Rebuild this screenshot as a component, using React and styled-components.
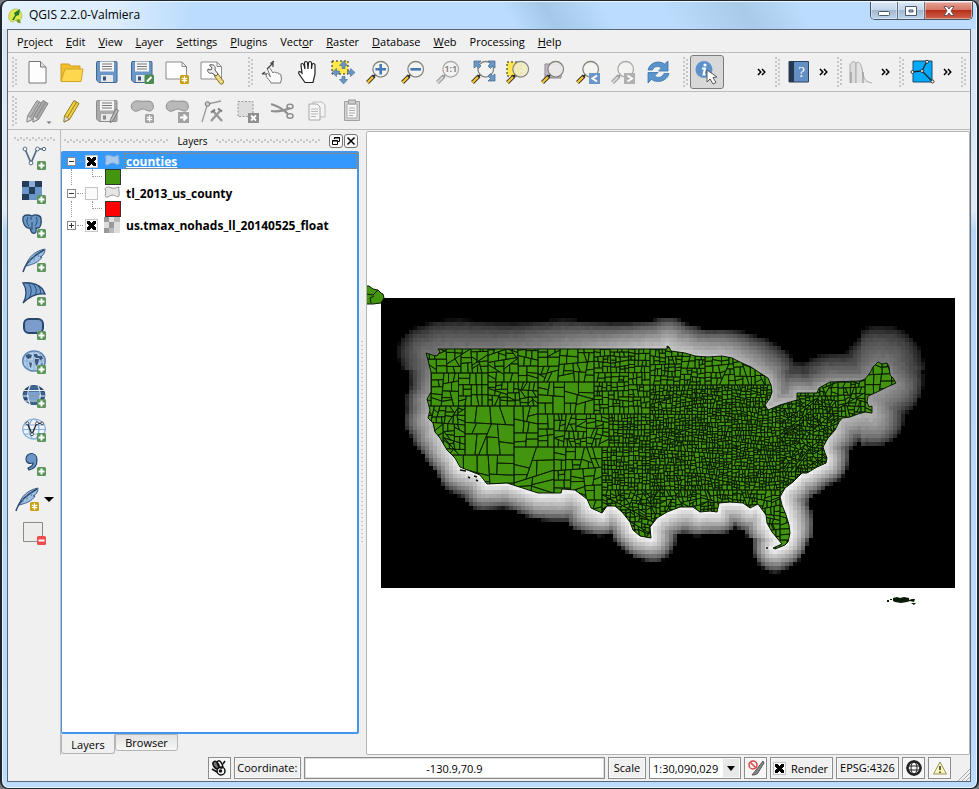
import React from 'react';
import styled, { createGlobalStyle, css } from 'styled-components';

const GlobalStyle = createGlobalStyle`
  * { box-sizing: border-box; }
  html, body, #root { height: 100%; }
  body {
    margin: 0;
    background: #77797c;
    font-family: "Open Sans", "Noto Sans", sans-serif;
    font-size: 11px;
    color: #000;
    overflow: hidden;
  }
  button, input, select { font: inherit; color: inherit; }
  button { padding: 0; border: 0; background: none; }
  svg { display: block; }
`;

/* Window frame */
const Window = styled.div`
  display: flex;
  flex-direction: column;
  height: 100%;
  padding: 0 6px 6px 5px;
  border: 2px solid #20262f;
  border-top-width: 1px;
  border-bottom-width: 1px;
  border-radius: 8px;
  background: linear-gradient(180deg, #d5e4f3 0, #dfe9f4 210px, #b5d4f3 230px, #bcdcfb 100%);
  box-shadow: inset 0 0 0 1px #eaf5ff;
`;

const TitleBar = styled.header`
  display: flex;
  align-items: flex-start;
  height: 28px;
  flex: none;
  margin: 0 -5px 0 -4px;
  padding: 0 3px 0 4px;
  border-top: 1px solid #eef7ff;
  border-radius: 7px 7px 0 0;
  background:
    linear-gradient(90deg, rgba(255,255,255,0.6) 0, rgba(255,255,255,0.5) 110px, transparent 190px),
    linear-gradient(60deg, transparent 52%, #a5c8e8 56%, transparent 62%, transparent 68%, #a9cae9 76%, transparent 82%),
    #bbdcfc;
`;

const Title = styled.h1`
  flex: 1;
  margin: 0 0 0 6px;
  font-size: 12px;
  font-weight: 400;
  line-height: 26px;
`;

const AppIcon = styled.svg`
  margin-top: 6px;
`;

const WindowButtons = styled.div`
  display: flex;
  height: 18px;
  border: 1px solid #45566b;
  border-top: 0;
  border-radius: 0 0 5px 5px;
  overflow: hidden;
`;

const WindowButton = styled.button`
  display: grid;
  place-items: center;
  width: ${p => (p.$close ? 47 : 27)}px;
  border-right: ${p => (p.$close ? 0 : '1px solid #5c6f86')};
  background: ${p => (p.$close
    ? 'linear-gradient(#e6a597, #d47765 45%, #b8301b 50%, #d0634c)'
    : 'linear-gradient(#dbe8f5, #c4d6ea 45%, #a3b9d1 50%, #bcd3ea)')};
  box-shadow: inset 0 0 0 1px rgba(255, 255, 255, 0.4);
`;

const Client = styled.div`
  flex: 1;
  min-height: 0;
  display: flex;
  flex-direction: column;
  border: 1px solid #5a6774;
  background: #f0f0f0;
`;

/* Menu bar */
const MenuBar = styled.nav`
  display: flex;
  gap: 13px;
  height: 23px;
  flex: none;
  padding: 0 9px;
  border-bottom: 1px solid #bdbdbd;
`;

const MenuLink = styled.a`
  color: #000;
  text-decoration: none;
  line-height: 24px;
`;

/* Toolbars */
const dots = css`
  background-image:
    conic-gradient(at 2px 2px, transparent 270deg, #c6c6c6 0),
    conic-gradient(at 2px 2px, transparent 270deg, #c6c6c6 0);
  background-size: 6px 4px, 6px 4px;
  background-position: 0 0, 3px 2px;
`;

const ToolBar = styled.div`
  display: flex;
  align-items: center;
  height: ${p => p.$height}px;
  flex: none;
  padding: 0 2px 0 4px;
  border-bottom: 1px solid #bdbdbd;
`;

const Group = styled.div`
  display: flex;
  align-items: center;
  flex: ${p => (p.$grow ? '1' : 'none')};
  width: ${p => (p.$small ? '62px' : 'auto')};
  margin-right: ${p => p.$after || 0}px;
`;

const Handle = styled.span`
  width: 5px;
  height: 30px;
  margin-right: 2px;
  flex: none;
  ${dots}
`;

const ToolButton = styled.button`
  display: grid;
  place-items: center;
  width: ${p => (p.$narrow ? 34 : 35)}px;
  height: 34px;
  flex: none;
  ${p => p.$pressed && css`
    border: 1px solid #7d7d7d;
    border-radius: 3px;
    background: #d8d8d8;
  `}
`;

const More = styled.button`
  width: 15px;
  height: 34px;
  margin-left: auto;
  margin-right: 6px;
  display: grid;
  place-items: center;
`;

/* Body */
const Body = styled.div`
  display: flex;
  flex: 1;
  min-height: 0;
`;

const SideBar = styled.div`
  width: 53px;
  flex: none;
  display: flex;
  flex-direction: column;
  align-items: center;
  padding-top: 7px;
  border-right: 1px solid #bdbdbd;
`;

const SideHandle = styled.span`
  width: 41px;
  height: 4px;
  ${dots}
`;

const SideButton = styled.button`
  display: grid;
  place-items: center;
  width: ${p => (p.$narrow ? 26 : 44)}px;
  height: 34px;
  flex: none;
`;

const SideMenuRow = styled.div`
  display: flex;
  align-items: center;
  gap: 4px;
  margin-top: 1px;
`;

const Dock = styled.section`
  width: 298px;
  flex: none;
  display: flex;
  flex-direction: column;
`;

const DockTitle = styled.div`
  display: flex;
  align-items: center;
  height: 21px;
  flex: none;
  padding: 0 1px 0 3px;
  gap: 8px;
`;

const DockDots = styled.span`
  flex: 1;
  height: 4px;
  ${dots}
`;

const DockName = styled.h2`
  margin: 0;
  font-size: 10px;
  font-weight: 400;
`;

const DockButtons = styled.div`
  display: flex;
  gap: 1px;
`;

const DockButton = styled.button`
  display: grid;
  place-items: center;
  width: 14px;
  height: 14px;
  border: 1px solid #757575;
  border-radius: 3px;
  background: #fafafa;
`;

const Tree = styled.ul`
  flex: 1;
  min-height: 0;
  margin: 0;
  padding: 0;
  list-style: none;
  border: 2px solid #4296ec;
  border-left-width: 1px;
  border-radius: 2px;
  background: #fff;
`;

const LayerRow = styled.li`
  display: flex;
  align-items: center;
  height: 16px;
  padding-left: 5px;
  background: ${p => (p.$selected ? '#3399ff' : 'transparent')};
`;

const Expander = styled.button`
  width: 9px;
  height: 9px;
  border: 1px solid #8a8a8a;
  background: #fff;
`;

const Dash = styled.span`
  width: 6px;
  margin: 0 2px 0 1px;
  border-top: 1px dotted #999;
`;

const Tick = styled.input`
  appearance: none;
  width: 13px;
  height: 13px;
  flex: none;
  margin: 0;
  padding: 1px;
  border: 1px solid #c4c4c4;
  background: #fafafa;

  &:checked {
    background:
      linear-gradient(45deg, transparent 38%, #000 38%, #000 62%, transparent 62%) content-box,
      linear-gradient(-45deg, transparent 38%, #000 38%, #000 62%, transparent 62%) content-box,
      #fff;
  }
`;

const LayerLabel = styled.label`
  display: flex;
  align-items: center;
  flex: 1;
  height: 16px;
  margin-left: 6px;
  font-size: 12px;
  font-weight: 700;
`;

const LayerName = styled.span`
  flex: 1;
  height: 16px;
  margin-left: 4px;
  padding-left: 1px;
  line-height: 15px;
  border: 1px dotted ${p => (p.$selected ? '#c77a3a' : 'transparent')};
  color: ${p => (p.$selected ? '#fff' : '#000')};
  text-decoration: ${p => (p.$selected ? 'underline' : 'none')};
`;

const SymbolRow = styled.li`
  display: flex;
  height: 16px;
  margin-left: 9px;
  border-left: 1px dotted #999;
`;

const Elbow = styled.span`
  width: 10px;
  height: 8px;
  margin-left: 20px;
  border-left: 1px dotted #999;
  border-bottom: 1px dotted #999;
`;

const Swatch = styled.span`
  width: 16px;
  height: 16px;
  margin-left: 3px;
  border: 1px solid #333;
  background: ${p => p.$color};
`;

const Tabs = styled.div`
  display: flex;
  align-items: flex-start;
  height: 21px;
  flex: none;
`;

const Tab = styled.button`
  width: ${p => (p.$active ? 54 : 63)}px;
  height: ${p => (p.$active ? 20 : 17)}px;
  border: 1px solid #b4b4b4;
  border-top-color: ${p => (p.$active ? '#f0f0f0' : '#b4b4b4')};
  border-radius: 0 0 3px 3px;
  background: ${p => (p.$active ? '#f0f0f0' : 'linear-gradient(#e2e2e2, #f8f8f8)')};
`;

const Splitter = styled.div`
  width: 7px;
  flex: none;
  display: flex;
  align-items: center;

  &::before {
    content: '';
    width: 3px;
    height: 204px;
    margin-left: 2px;
    background: conic-gradient(at 2px 1px, transparent 270deg, #c6c6c6 0) 0 0 / 4px 4px;
  }
`;

const MapPanel = styled.main`
  flex: 1;
  min-width: 0;
  margin-top: 1px;
  border: 1px solid #b4b4b4;
  border-radius: 2px;
  background: #fff;
  overflow: hidden;
`;

/* Status bar */
const StatusBar = styled.footer`
  display: flex;
  align-items: center;
  gap: 3px;
  height: 26px;
  flex: none;
`;

const Spacer = styled.span`
  flex: 2;
`;

const frame = css`
  height: 22px;
  border: 1px solid #8c8c8c;
  box-shadow: inset 0 0 0 1px #fafafa;
`;

const StatusLabel = styled.label`
  ${frame}
  width: ${p => p.$width}px;
  text-align: center;
  line-height: 20px;
`;

const StatusText = styled.span`
  ${frame}
  width: 63px;
  text-align: center;
  line-height: 20px;
`;

const RenderLabel = styled.label`
  ${frame}
  display: flex;
  align-items: center;
  gap: 5px;
  width: 63px;
  padding-left: 2px;
`;

const Coordinate = styled.input`
  flex: 3;
  min-width: 0;
  ${frame}
  box-shadow: inset 0 0 0 1px #ddd;
  background: #fff;
  text-align: center;
`;

const ScaleWrap = styled.div`
  ${frame}
  display: grid;
  grid-template-columns: 1fr 18px;
  align-items: center;
  width: 92px;
  background: linear-gradient(90deg, #fff 73px, #e8e8e8 73px);
`;

const ScaleSelect = styled.select`
  grid-row: 1;
  grid-column: 1 / 3;
  appearance: none;
  height: 20px;
  padding: 0 0 0 3px;
  border: 0;
  background: transparent;
`;

const Arrow = styled.svg`
  grid-row: 1;
  grid-column: 2;
  justify-self: center;
  pointer-events: none;
`;

const StatusButton = styled.button`
  ${frame}
  display: grid;
  place-items: center;
  width: 23px;
  flex: none;
  background: #f6f6f6;
`;

const Grip = styled.svg`
  align-self: flex-end;
`;

/* Icon pieces */
const BLUE = '#6a97c8';
const NAVY = '#28476b';

const Svg = ({ size = 24, children }) => (
  <svg width={size} height={size} viewBox={`0 0 ${size} ${size}`} fill="none" overflow="visible" aria-hidden="true">{children}</svg>
);

const PlusBadge = () => (
  <g>
    <rect x="15" y="15" width="9" height="9" rx="1.500" fill="#5b955b" />
    <path d="M19.500 16.500v6M16.500 19.500h6" stroke="#fff" strokeWidth="2" />
  </g>
);

const StarBadge = ({ fill = '#c9a012' }) => (
  <g>
    <rect x="15" y="15" width="9" height="9" rx="1.500" fill={fill} />
    <path d="M19.500 16.300v6.400M16.800 18l5.400 3M16.800 21l5.400-3" stroke="#fff" strokeWidth="1.400" />
  </g>
);

const Lens = ({ off, children }) => (
  <g>
    <path d="M1.500 22.500L8 16" stroke={off ? '#999' : '#3b3b30'} strokeWidth="4" />
    <path d="M1.500 22.500L7 17" stroke={off ? '#d5d5d5' : '#ffc62c'} strokeWidth="2.200" />
    <path d="M7.500 16.500L10 14" stroke={off ? '#999' : '#222'} strokeWidth="2" />
    <circle cx="14.700" cy="9.300" r="7.800" fill="#f3f3f0" fillOpacity=".82" stroke={off ? '#ababab' : '#85857f'} strokeWidth="1.300" />
    {children}
  </g>
);

const Sheet = () => (
  <path d="M1 2h16l4.500 4.500V19H1zM17 2v4.500h4.500" fill="#fdfdfd" stroke="#8b8b8b" />
);

const Floppy = ({ off }) => (
  <g>
    <path d="M2 1.500h19q1 0 1 1v19q0 1-1 1H4l-2.500-2.500V2.500z" fill={off ? '#a9a9a9' : BLUE} stroke={off ? '#8d8d8d' : '#45668f'} />
    <path d="M5 1.500h14v10H5z" fill="#f5f5f5" />
    <path d="M7 4h10M7 6.500h10M7 9h10" stroke="#777" />
    <path d="M6 15h12v7H6z" fill="#e8e8e8" />
    <path d="M8 16.500h3v4H8z" fill={off ? '#888' : '#33557f'} />
  </g>
);

const Pencil = ({ x = 0, body, dark }) => (
  <g transform={`translate(${x} 0)`}>
    <path d="M14 1.500l5 3-9.500 16-5.500 2.500.5-6z" fill={body} stroke={dark} />
    <path d="M16.500 3L7 19M4 23l1-3 2 1z" stroke={dark} fill={dark} />
    <path d="M4.500 17l5 3-5.500 3z" fill="#ddd" stroke={dark} strokeWidth=".7" />
  </g>
);

const Blob = () => (
  <path d="M1.500 9C0 4 5 1 9.500 2c4 1 9-1 12 1 3 3 2 8-1 9-3 .5-5-2-8-2-3 .5-5 3-8 2-1.500-.5-2.500-1.500-3-3z" fill="#b9b9b9" stroke="#8d8d8d" />
);

const Quill = () => (
  <g>
    <path d="M4 18C6 9 13 3 23 1c0 4-2 7-5 8l2 0c-3 5-8 7-16 9z" fill="#9fc0e0" stroke="#3e618a" />
    <path d="M1 24C3 16 11 8 22 2" stroke="#2d4b70" strokeWidth="1.500" />
    <path d="M8 12v3M12 8.500v4M16 5.500l.5 3.500" stroke="#5c83ae" />
  </g>
);

const Polyline = ({ color }) => (
  <g stroke={color} fill="#fff">
    <path d="M3 3l6 14L15 3h7" strokeWidth="1.700" fill="none" />
    <circle cx="3" cy="3" r="1.900" /><circle cx="9" cy="17" r="1.900" />
    <circle cx="15.500" cy="3" r="1.900" /><circle cx="22" cy="3" r="1.700" />
  </g>
);

const Globe = ({ fill, line }) => (
  <g stroke={line} strokeWidth="1.200">
    <ellipse cx="12" cy="11" rx="11.300" ry="10" fill={fill} />
    <ellipse cx="12" cy="11" rx="5" ry="10" />
    <path d="M2 7h20M1 11.500h22M2 16h20" />
  </g>
);

const icons = {
  newProject: <><path d="M4 1.500h11.500L21 7v16H4z" fill="#fdfdfd" stroke="#777" /><path d="M15.500 1.500V7H21" stroke="#777" fill="#ddd" /></>,
  open: <><path d="M1 21V4h8l2 2h9v4" fill="#f0c02e" stroke="#c99b1f" /><path d="M1 21.500L5 9h18l-2 12.500z" fill="#ffd84f" stroke="#d0a427" /></>,
  save: <Floppy />,
  saveAs: <><Floppy /><rect x="14.500" y="14.500" width="9.500" height="9.500" rx="1.500" fill="#4f8a50" /><path d="M17 21.500l4.500-4.500" stroke="#fff" strokeWidth="2" /></>,
  newComposer: <><Sheet /><StarBadge /></>,
  composer: (
    <>
      <Sheet />
      <path d="M16.500 15.500l5 6.500" stroke="#8c7a30" strokeWidth="5" strokeLinecap="round" />
      <path d="M16.500 15.500l5 6.500" stroke="#f4dc84" strokeWidth="3" strokeLinecap="round" />
      <path d="M9.500 5c4-1 6.500 1 5.500 5l3 4-2 2-4-3c-3 1-5-1-4-4l3 1 1-2z" fill="#eee" stroke="#555" />
    </>
  ),
  touch: (
    <>
      <path d="M10 23c-1-3-4-4-5-8 0-2 2-2 3 0l1.500 2-3-8c0-2 2-2 3 0l2.500 4c1-1.500 2.500-1 3 0 1-1 2.500-.5 2.500 1 1.500-.5 2.500 0 2.500 2l.5 3-1 4z" fill="#fafafa" stroke="#777" />
      <path d="M1 14h5M1 14l3-2M6 9l6-6M12 7V1M9.500 3.500L13 1" stroke="#444" strokeWidth="1.200" />
    </>
  ),
  pan: <path d="M8 22.500L2 14c-1-3 1-3 3-1L4 5c0-2 2-2 3 0l1 4-.5-6c0-2 2.500-2 3 0l.5 6 .5-6c.5-2 2.500-2 3 0v6l.5-4c.5-2 2.500-2 3 0v9L16 22.500z" transform="translate(1 0)" fill="#fff" stroke="#222" strokeWidth="1.200" />,
  panSelection: (
    <>
      <path d="M1 1h16v13H1z" fill="#ffe74c" stroke="#222" strokeDasharray="2 2" />
      <path d="M12.500 1l4 4.500h-2.500v3h-3v-3H8.500zM12.500 24l4-4.500h-2.500v-3h-3v3H8.500zM1 12.500l4.500-4V11h3v3h-3v2.500zM24 12.500l-4.500-4V11h-3v3h3v2.500z" fill={BLUE} stroke="#40668f" strokeWidth=".6" />
    </>
  ),
  zoomIn: <Lens><path d="M14.700 4v10.600M9.400 9.300H20" stroke="#4579b5" strokeWidth="2.600" /></Lens>,
  zoomOut: <Lens><path d="M9.400 9.300H20" stroke="#4579b5" strokeWidth="2.600" /></Lens>,
  zoomNative: <Lens off><text x="14.700" y="12.300" textAnchor="middle" fontSize="9" fontWeight="700" fill="#8a8a8a">1:1</text></Lens>,
  zoomFull: <><Lens /><path d="M3 1h7L7.500 3.500 10 6 7.500 8.500 5.500 6 3 8zM24 1h-7l2.500 2.500L17 6l2.500 2.500 2-2.500L24 8zM24 21h-7l2.500-2.500L17 16l2.500-2.500 2 2.500 2.500-2z" fill={BLUE} stroke="#3f648e" strokeWidth=".7" /></>,
  zoomSelection: <><path d="M1 2h14v14H1z" fill="#ffe74c" stroke="#222" strokeDasharray="2 2" /><Lens><circle cx="14.700" cy="9.300" r="7" fill="#eee7ae" fillOpacity=".6" /></Lens></>,
  zoomLayer: <><path d="M4 4h16v14H4z" fill="#c2b8c9" stroke="#8e8595" /><Lens /></>,
  zoomLast: <><Lens /><path d="M13 13h11v11H13z" fill={BLUE} /><path d="M21 15.500l-4.500 3 4.500 3" stroke="#fff" strokeWidth="2" /></>,
  zoomNext: <><Lens off /><path d="M13 13h11v11H13z" fill="#b0b0b0" /><path d="M16.500 15.500l4.500 3-4.500 3" stroke="#fff" strokeWidth="2" /></>,
  refresh: (
    <>
      <path d="M2 10C4 2 13 0 18.500 4L22 1v10h-9.500l3-3c-4-3-8-1-9 2z" fill="#5b93cc" stroke="#3a73ae" strokeWidth=".8" />
      <path d="M23 13.500c-2 8-12 10-17.500 6L2 23V12.500h10l-3.500 3.500c4 3 8 1 9.500-2.500z" fill="#5b93cc" stroke="#3a73ae" strokeWidth=".8" />
    </>
  ),
  identify: (
    <>
      <circle cx="9" cy="9.500" r="8.500" fill="#5d91c9" />
      <circle cx="10" cy="5" r="1.600" fill="#fff" />
      <path d="M7 8.500h3l-1.500 6h2" stroke="#fff" strokeWidth="2" />
      <path d="M12 10v12l3-3 3 5 3-1.500-3-5 4-.5z" fill="#fff" stroke="#555" />
    </>
  ),
  help: <><path d="M2 1.500h19.500V22H2z" fill="#638fc4" stroke="#2b4361" /><path d="M2 1.500h5V22H2z" fill="#26384f" /><text x="14.500" y="17" textAnchor="middle" fontSize="15" fill="#fff" fontFamily="Liberation Serif, serif">?</text></>,
  histogram: <><path d="M1 23V5c3-6 6-3 6 0v18" fill="#dcdcdc" stroke="#aaa" /><path d="M7 23V3c4-3 6 3 7 12 2 6 5 7 9 8" fill="#e2e2e2" stroke="#aaa" /><path d="M2 12v11M14 12v11" stroke="#888" /></>,
  topology: <><path d="M2 1h19v21H2z" fill="#00aaff" stroke="#1d4767" /><path d="M1 12l10-1 5-10M11 11l10 10" stroke="#222" strokeWidth="1.300" /><g fill="#fff" stroke="#333"><circle cx="1.500" cy="12" r="1.500" /><circle cx="11" cy="11" r="1.500" /><circle cx="16" cy="1.800" r="1.500" /><circle cx="21.500" cy="21.500" r="1.500" /></g></>,
  edits: (
    <>
      <Pencil x={-2} body="#b5b5b5" dark="#8a8a8a" />
      <Pencil x={4} body="#a9a9a9" dark="#858585" />
      <path d="M21.500 22.500h5l-2.500 2.500z" fill="#777" />
    </>
  ),
  edit: <Pencil body="#f1d23c" dark="#8f7a2a" />,
  saveEdits: <><Floppy off /><path d="M21 10l2.500 1.500-6 11-2.500 1 .5-3z" fill="#bbb" stroke="#777" /></>,
  addFeature: <><Blob /><StarBadge fill="#a2a2a2" /></>,
  moveFeature: <><Blob /><path d="M13 13h11v11H13z" fill="#a2a2a2" /><path d="M15 18.500h6M18.500 15.500l3 3-3 3" stroke="#fff" strokeWidth="2" /></>,
  nodeTool: (
    <>
      <path d="M2 23L7.500 5 21 2" stroke="#999" strokeWidth="1.300" />
      <circle cx="7.500" cy="5" r="2.300" fill="#ccc" stroke="#777" />
      <path d="M13 12l9 10M20 12l-9 10" stroke="#999" strokeWidth="2.400" />
      <path d="M18 9.500l4 3M11 13.500l4-3" stroke="#777" strokeWidth="2" />
    </>
  ),
  deleteSelected: <><path d="M3 2.500h15v15H3z" fill="#ddd" stroke="#999" strokeDasharray="2 1.500" /><path d="M13 14h11v10H13z" fill="#8f8f8f" /><path d="M16 16.500l5 5M21 16.500l-5 5" stroke="#fff" strokeWidth="1.800" /></>,
  cut: <><path d="M1 5c7 2 12 5 17 10M1 12c7 1 13 0 19-3" stroke="#909090" strokeWidth="2.200" /><ellipse cx="20" cy="7.500" rx="3" ry="2.200" stroke="#909090" strokeWidth="1.600" /><ellipse cx="20" cy="17" rx="3" ry="2.200" stroke="#909090" strokeWidth="1.600" /></>,
  copy: <><path d="M8 3h9l3 3v12H8z" fill="#f3f3f3" stroke="#bbb" /><path d="M4 5h8l3 3v13H4z" fill="#f6f6f6" stroke="#a8a8a8" /><path d="M6 10h7M6 12.500h7M6 15h7M6 17.500h5" stroke="#b8b8b8" /></>,
  paste: <><path d="M4.500 2.500h15v19h-15z" fill="#d5d5d5" stroke="#a0a0a0" /><path d="M7 5h10v14H7z" fill="#f8f8f8" stroke="#aaa" /><path d="M8.500 1h7v4h-7z" fill="#ccc" stroke="#999" /><path d="M9 9h6M9 11.500h6M9 14h6M9 16.500h4" stroke="#aaa" /></>,
  addVector: <><Polyline color="#536b88" /><PlusBadge /></>,
  addRaster: <><path d="M0 1h20v19H0z" fill={BLUE} /><path d="M0 1h7v6H0zM13 1h7v6h-7zM7 7h6v7H7zM0 14h7v6H0z" fill="#233c5a" /><path d="M7 1h6v6H7z" fill="#89add4" /><PlusBadge /></>,
  addPostgis: <><path d="M1 3c2-3 7-2 9-1 3-2 9-1 9 3 1 5-1 9-3 9h-2v4c-1 2-4 2-5-1l-1-3c-5 1-8-6-7-11z" fill={BLUE} stroke={NAVY} strokeWidth="1.300" /><path d="M6 3c-2 4-1 7 1 9M14 3c2 3 1 7-1 9M10 8v8M9 3v3" stroke={NAVY} /><PlusBadge /></>,
  addSpatialite: <><Quill /><PlusBadge /></>,
  addMssql: <><path d="M1 1c8-1 19 1 22 11-8-1-15 2-22 9 4-6 4-14 0-20z" fill={BLUE} stroke={NAVY} strokeWidth="1.300" /><path d="M6 1c4 4 4 11 1 15M11 2c4 4 4 8 2 11M16 4c3 3 3 6 2 8" stroke={NAVY} /><PlusBadge /></>,
  addOracle: <><rect x="2" y="3" width="19" height="14" rx="5" fill="#7c9dcb" stroke={NAVY} strokeWidth="2" /><PlusBadge /></>,
  addWms: (
    <>
      <ellipse cx="12" cy="11" rx="11.300" ry="10" fill="#b4cee9" stroke="#5984b4" strokeWidth="1.500" />
      <path d="M2 11h20M12 1v20M7 2c-3 6-3 12 0 18M17 2c3 6 3 12 0 18" stroke="#89abd0" />
      <path d="M4 5l3-1 3 1-1 3-3 1-2-2zM12 4h3l1 2h4l1 3-3 1-1-2-3 0-2-2zM7 12l3 1-1 5-1-1zM13 9h4l-1 5-2 2-1-4zM19 14l2-1-1 3z" fill="#3a5578" />
      <PlusBadge />
    </>
  ),
  addWcs: <><ellipse cx="12" cy="11" rx="11.300" ry="10" fill="#28476b" /><path d="M8 2h8l1 5H7zM1.500 8H7v6H1.500zM17 8h5.500v6H17zM8 15h8l-1 6H9z" fill="#3c628f" /><path d="M2 6.500h20M1 12h22M3 17h18M8 2c-3 6-3 12 0 18M16 2c3 6 3 12 0 18" stroke="#e5effa" strokeWidth="1.200" /><path d="M7 7.500h10v4H7zM7 13h10v3H7z" fill="#7aa2d0" /><PlusBadge /></>,
  addWfs: <><Globe fill="#eef5fc" line="#86aedb" /><g transform="translate(3 3) scale(.78)"><Polyline color="#222" /></g><PlusBadge /></>,
  addText: <><path d="M4 7c0-7 11-8 11 1 0 6-3 9-8 10l-1-2c3-1 5-3 5-5-4 1-7 0-7-4z" fill={BLUE} stroke={NAVY} strokeWidth="1.200" /><PlusBadge /></>,
  newLayer: <><Quill /><StarBadge /></>,
  removeLayer: <><path d="M1.500 1.500h19v19h-19z" fill="#ededeb" stroke="#8c8c87" /><rect x="15" y="15" width="9" height="9" rx="1.500" fill="#ee4b4b" /><path d="M16.500 19.500h6" stroke="#fff" strokeWidth="2" /></>,
};

const Icon = ({ name }) => <Svg>{icons[name]}</Svg>;

const PolygonIcon = ({ fill, stroke }) => (
  <Svg size={16}><path d="M1 4c1-3 4-2 7-1 3 1 5-1 7-1-1 3 1 5 0 9-2 2-4-1-6-1-3 0-5 3-7 2-2-1 1-5-1-8z" fill={fill} stroke={stroke} /></Svg>
);

const RasterIcon = () => (
  <Svg size={16}>
    <path d="M0 0h16v16H0z" fill="#ddd" />
    <path d="M0 0h5v5H0zM5 5h5v6H5zM0 11h5v5H0z" fill="#999" />
    <path d="M10 0h6v5h-6zM10 11h-5v5h5z" fill="#b9b9b9" />
  </Svg>
);

const Chevrons = () => (
  <svg width="9" height="8" fill="none" stroke="#000" strokeWidth="1.500" aria-hidden="true">
    <path d="M1 1l2.800 3L1 7M5 1l2.800 3L5 7" />
  </svg>
);

/* Map drawing, in window coordinates of the full extent */
const EXTENT = { x: 381, y: 298, w: 574, h: 290 };
const CELL = 4;

const outline = [
  [426, 353], [432, 355], [437, 356], [440, 352], [438, 349], [667, 349], [667, 346], [669, 347], [671, 351], [685, 353],
  [695, 356], [708, 357], [722, 356], [732, 358], [742, 363], [751, 367], [760, 373], [768, 378], [771, 385],
  [772, 392], [770, 398], [765, 405], [768, 410], [780, 405], [797, 400], [797, 393], [817, 393], [819, 388],
  [830, 382], [860, 381], [865, 379], [870, 373], [873, 367], [878, 362], [882, 364], [887, 363], [889, 367],
  [890, 375], [893, 378], [896, 383], [887, 387], [877, 392], [868, 396], [867, 402], [869, 407], [872, 406],
  [872, 413], [865, 412], [858, 414], [850, 417], [842, 418], [839, 422], [835, 430], [828, 438], [823, 447],
  [825, 453], [827, 458], [826, 463], [817, 467], [807, 473], [802, 473], [793, 482], [785, 488], [780, 497],
  [782, 505], [786, 515], [789, 525], [790, 533], [788, 542], [785, 545], [775, 549], [773, 548], [782, 544],
  [777, 538], [772, 532], [767, 523], [766, 515], [758, 504], [750, 508], [743, 503], [730, 502], [719, 503],
  [717, 512], [710, 511], [700, 512], [693, 507], [680, 507], [667, 512], [657, 518], [650, 527], [651, 538],
  [640, 536], [633, 530], [630, 522], [622, 512], [615, 506], [607, 506], [602, 513], [591, 508], [587, 499],
  [575, 490], [562, 489], [561, 493], [538, 493], [507, 483], [487, 484], [480, 475], [470, 471], [460, 467],
  [455, 458], [447, 450], [440, 438], [435, 432], [433, 423], [428, 418], [430, 410], [427, 399], [431, 392],
  [431, 372], [428, 360],
];

const toPath = points => `M${points.map(([x, y]) => `${x.toFixed(1)} ${y.toFixed(1)}`).join('L')}Z`;

// x0, y0, x1, y1, typical county size, how far cuts lean
const regions = [
  [420, 344, 488, 373, 7, 0.7],
  [420, 373, 488, 406, 8, 0.4],
  [488, 344, 538, 382, 7, 0.9],
  [538, 344, 594, 382, 8, 0.6],
  [488, 382, 538, 406, 6, 0.9],
  [538, 382, 594, 414, 10, 0.3],
  [420, 406, 465, 455, 6, 0.9],
  [420, 455, 514, 500, 14, 0.3],
  [465, 406, 514, 455, 14, 0.6],
  [514, 406, 538, 447, 9, 0.3],
  [538, 414, 554, 447, 8, 0.3],
  [514, 447, 554, 500, 14, 0.4],
  [554, 414, 609, 447, 6, 0.6],
  [554, 447, 602, 500, 8, 0.5],
  [594, 344, 650, 414, 5, 0.2],
  [609, 414, 650, 447, 4, 0.05],
  [602, 447, 650, 490, 4, 0.05],
  [554, 500, 602, 550, 10, 0.6],
  [602, 490, 660, 550, 4, 0.8],
  [650, 344, 705, 385, 5, 0.3],
  [705, 344, 780, 385, 6, 0.6],
  [650, 385, 780, 490, 3.6, 0.35],
  [660, 490, 757, 520, 4, 0.6],
  [780, 396, 838, 500, 3.4, 0.9],
  [757, 490, 780, 560, 5, 0.5],
  [780, 500, 800, 560, 7, 0.4],
  [780, 375, 838, 396, 5, 0.6],
  [838, 375, 865, 430, 5, 0.6],
  [865, 355, 900, 420, 8, 0.5],
];

const makeRandom = seed => () => {
  seed = (seed * 16807) % 2147483647;
  return seed / 2147483647;
};

const area = p => Math.abs(p.reduce((sum, [x, y], i) => {
  const [nx, ny] = p[(i + 1) % p.length];
  return sum + x * ny - nx * y;
}, 0)) / 2;

const cutHalf = (poly, side) => {
  const out = [];
  poly.forEach((a, i) => {
    const b = poly[(i + 1) % poly.length];
    const da = side(a);
    const db = side(b);
    if (da >= 0) out.push(a);
    if ((da >= 0) !== (db >= 0)) {
      const t = da / (da - db);
      out.push([a[0] + (b[0] - a[0]) * t, a[1] + (b[1] - a[1]) * t]);
    }
  });
  return out;
};

const buildCounties = () => {
  const random = makeRandom(77);
  const parts = [];

  const split = (poly, size, lean) => {
    if (poly.length < 3) return;
    if (area(poly) < size * size * (0.9 + random() * 1.3)) {
      parts.push(toPath(poly));
      return;
    }
    const xs = poly.map(p => p[0]);
    const ys = poly.map(p => p[1]);
    const x0 = Math.min(...xs);
    const y0 = Math.min(...ys);
    const w = Math.max(...xs) - x0;
    const h = Math.max(...ys) - y0;
    const cx = x0 + w * (0.35 + random() * 0.3);
    const cy = y0 + h * (0.35 + random() * 0.3);
    // most borders run straight, a few slant
    const tilt = (random() * 2 - 1) ** 3 * lean;
    const side = w > h
      ? ([x, y]) => (x - cx) + (y - cy) * tilt
      : ([x, y]) => (y - cy) + (x - cx) * tilt;
    split(cutHalf(poly, side), size, lean);
    split(cutHalf(poly, p => -side(p)), size, lean);
  };

  regions.forEach(([x0, y0, x1, y1, size, lean]) => {
    split([[x0, y0], [x1, y0], [x1, y1], [x0, y1]], size, lean);
  });
  return parts.join('');
};

const distanceToOutline = (x, y) => {
  let best = Infinity;
  outline.forEach(([ax, ay], i) => {
    const [bx, by] = outline[(i + 1) % outline.length];
    const dx = bx - ax;
    const dy = by - ay;
    const t = Math.max(0, Math.min(1, ((x - ax) * dx + (y - ay) * dy) / (dx * dx + dy * dy)));
    best = Math.min(best, Math.hypot(x - ax - dx * t, y - ay - dy * t));
  });
  return best;
};

// Temperature raster: bright by the coast, black past the edge of the data
const buildRaster = () => {
  const random = makeRandom(11);
  const shades = {};
  for (let y = EXTENT.y; y < EXTENT.y + EXTENT.h; y += CELL) {
    for (let x = EXTENT.x; x < EXTENT.x + EXTENT.w; x += CELL) {
      const d = distanceToOutline(x + 2, y + 2);
      const reach = 25 + 2 * Math.sin(x / 17) + 2 * Math.sin(y / 13)
        + (y < 370 ? 4 : 0) + (x > 860 ? 6 : 0) - (y > 535 && x > 700 ? 3 : 0);
      if (d < reach) {
        const south = Math.max(0, Math.min(1, (y - 360) / 110));
        const middle = Math.exp(-(((x - 680) / 120) ** 2));
        const base = 115 + south * 130 + (1 - south) * middle * 85;
        const value = base * (1 - d / reach) ** 0.52 + (random() - 0.5) * 5;
        const shade = Math.max(0, Math.min(250, Math.round(value / 5) * 5));
        const h = Math.min(CELL, EXTENT.y + EXTENT.h - y);
        shades[shade] = `${shades[shade] || ''}M${x} ${y}h${CELL}v${h}h-${CELL}z`;
      }
    }
  }
  return Object.entries(shades);
};

const outlinePath = toPath(outline);
const countyPath = buildCounties();
const raster = buildRaster();

const CountyMap = () => (
  <svg width="100%" height="100%" role="img" aria-label="Map of US counties">
    <defs>
      <clipPath id="land"><path d={outlinePath} /></clipPath>
    </defs>
    <g transform="translate(-367 -132)">
      <rect x={EXTENT.x} y={EXTENT.y} width={EXTENT.w} height={EXTENT.h} fill="#000" />
      <g shapeRendering="crispEdges">
        {raster.map(([shade, d]) => <path key={shade} d={d} fill={`rgb(${shade},${shade},${shade})`} />)}
      </g>
      <path d={outlinePath} fill="#43950f" />
      <path d={countyPath} clipPath="url(#land)" fill="none" stroke="#0a1805" strokeWidth="0.8" />
      <path d={outlinePath} fill="none" stroke="#0a1805" strokeLinejoin="round" />
      <path d="M460 470l6 1M468 477l2 1M474 476l3 1M476 480l2 1M766 548h2" stroke="#0a1805" strokeWidth="1.500" />
      <path d="M360 286h9l4 3 5 1 3 3 2 1 1 4-3 5-8 1h-14z" fill="#43950f" stroke="#0a1805" />
      <path d="M367 294l6 1 5-5M371 303l-1-5 4-2" fill="none" stroke="#0a1805" />
      <path d="M887 600h2v2h-2zM890 599h2v1h-2zM893 598l4-1 3 1 4-1 5 1 0 2 3-1 3 0-1 3-4-1-3 1-6 1-6-1-2-1zM911 603l5 0-2 2z" fill="#0b1a06" />
    </g>
  </svg>
);

/* Content */
const menus = [
  ['P', 'r', 'oject'], ['', 'E', 'dit'], ['', 'V', 'iew'], ['', 'L', 'ayer'], ['', 'S', 'ettings'], ['', 'P', 'lugins'],
  ['Vect', 'o', 'r'], ['', 'R', 'aster'], ['', 'D', 'atabase'], ['', 'W', 'eb'], ['Processing', '', ''], ['', 'H', 'elp'],
];

const fileTools = [
  ['newProject', 'New'], ['open', 'Open'], ['save', 'Save'], ['saveAs', 'Save As'],
  ['newComposer', 'New Print Composer'], ['composer', 'Composer Manager'],
];

const navTools = [
  ['touch', 'Touch Zoom and Pan'], ['pan', 'Pan Map'], ['panSelection', 'Pan to Selection'], ['zoomIn', 'Zoom In'],
  ['zoomOut', 'Zoom Out'], ['zoomNative', 'Zoom to Native Resolution'], ['zoomFull', 'Zoom Full'],
  ['zoomSelection', 'Zoom to Selection'], ['zoomLayer', 'Zoom to Layer'], ['zoomLast', 'Zoom Last'],
  ['zoomNext', 'Zoom Next'], ['refresh', 'Refresh'],
];

const pluginTools = [['help', 'Help Contents'], ['histogram', 'Histogram'], ['topology', 'Topology Checker']];

const editTools = [
  ['edits', 'Current Edits'], ['edit', 'Toggle Editing'], ['saveEdits', 'Save Layer Edits'], ['addFeature', 'Add Feature'],
  ['moveFeature', 'Move Feature'], ['nodeTool', 'Node Tool'], ['deleteSelected', 'Delete Selected'],
  ['cut', 'Cut Features'], ['copy', 'Copy Features'], ['paste', 'Paste Features'],
];

const layerTools = [
  ['addVector', 'Add Vector Layer'], ['addRaster', 'Add Raster Layer'], ['addPostgis', 'Add PostGIS Layer'],
  ['addSpatialite', 'Add SpatiaLite Layer'], ['addMssql', 'Add MSSQL Layer'], ['addOracle', 'Add Oracle Layer'],
  ['addWms', 'Add WMS Layer'], ['addWcs', 'Add WCS Layer'], ['addWfs', 'Add WFS Layer'], ['addText', 'Add Delimited Text Layer'],
];

const layers = [
  { name: 'counties', selected: true, visible: true, open: true, symbol: '#43950f', icon: <PolygonIcon fill="#a7c9ec" stroke="#6fa2d8" /> },
  { name: 'tl_2013_us_county', open: true, symbol: '#ff0000', icon: <PolygonIcon fill="#e6e6e6" stroke="#999" /> },
  { name: 'us.tmax_nohads_ll_20140525_float', visible: true, icon: <RasterIcon /> },
];

const Tools = ({ items }) => items.map(([name, label]) => (
  <ToolButton key={name} title={label} aria-label={label}><Icon name={name} /></ToolButton>
));

const Layer = ({ layer }) => (
  <>
    <LayerRow $selected={layer.selected}>
      <Expander aria-label={`Toggle ${layer.name}`}>
        <svg width="7" height="7" stroke="#333"><path d={layer.open ? 'M1 3.500h5' : 'M1 3.500h5M3.500 1v5'} /></svg>
      </Expander>
      <Dash />
      <Tick type="checkbox" id={layer.name} defaultChecked={layer.visible} />
      <LayerLabel htmlFor={layer.name}>
        {layer.icon}
        <LayerName $selected={layer.selected}>{layer.name}</LayerName>
      </LayerLabel>
    </LayerRow>
    {layer.symbol && (
      <SymbolRow>
        <Elbow />
        <Swatch $color={layer.symbol} />
      </SymbolRow>
    )}
  </>
);

const App = () => (
  <>
    <GlobalStyle />
    <Window>
      <TitleBar>
        <AppIcon width="16" height="16" viewBox="0 0 16 16">
          <path d="M3 4c3-4 9-4 11 0 2 4 0 9-3 11l-2-3-4 2C1 13 1 7 3 4z" fill="#dfe84a" stroke="#b8c46a" />
          <path d="M5 12l3-5-1-2 6-4-1 6-3 1-2 4z" fill="#1d7a2a" />
          <path d="M9 12l3 3h2l-2-4z" fill="#6a9a2a" />
        </AppIcon>
        <Title>QGIS 2.2.0-Valmiera</Title>
        <WindowButtons>
          <WindowButton aria-label="Minimize">
            <svg width="12" height="12"><rect x="0.500" y="6.500" width="11" height="4" rx="1" fill="#fff" stroke="#4d5a6c" /></svg>
          </WindowButton>
          <WindowButton aria-label="Maximize">
            <svg width="12" height="12"><path d="M.5 1.500h11v9H.5zM4 5v2h4V5z" fillRule="evenodd" fill="#fff" stroke="#4d5a6c" /></svg>
          </WindowButton>
          <WindowButton $close aria-label="Close">
            <svg width="12" height="12"><path d="M1 1.500h3l2 2.500 2-2.500h3L8 6l3 4.500H8L6 8l-2 2.500H1L4 6z" fill="#fff" stroke="#5c4a52" strokeWidth=".9" /></svg>
          </WindowButton>
        </WindowButtons>
      </TitleBar>

      <Client>
        <MenuBar>
          {menus.map(([before, key, after]) => (
            <MenuLink key={before + key + after} href="#menu">{before}{key && <u>{key}</u>}{after}</MenuLink>
          ))}
        </MenuBar>

        <ToolBar $height={39}>
          <Group $after={19}><Handle /><Tools items={fileTools} /></Group>
          <Group $after={8}><Handle /><Tools items={navTools} /></Group>
          <Group $grow>
            <Handle />
            <ToolButton $narrow $pressed aria-label="Identify Features"><Icon name="identify" /></ToolButton>
            <More aria-label="More attribute tools"><Chevrons /></More>
          </Group>
          {pluginTools.map(([name, label]) => (
            <Group key={name} $small>
              <Handle />
              <ToolButton $narrow aria-label={label}><Icon name={name} /></ToolButton>
              <More aria-label={`More ${label}`}><Chevrons /></More>
            </Group>
          ))}
          <Handle />
        </ToolBar>
        <ToolBar $height={38}>
          <Group><Handle /><Tools items={editTools} /></Group>
        </ToolBar>

        <Body>
          <SideBar>
            <SideHandle />
            {layerTools.map(([name, label]) => (
              <SideButton key={name} title={label} aria-label={label}><Icon name={name} /></SideButton>
            ))}
            <SideMenuRow>
              <SideButton $narrow aria-label="New Layer"><Icon name="newLayer" /></SideButton>
              <svg width="10" height="5" aria-hidden="true"><path d="M0 0h10L5 5z" /></svg>
            </SideMenuRow>
            <SideButton aria-label="Remove Layer"><Icon name="removeLayer" /></SideButton>
          </SideBar>

          <Dock>
            <DockTitle>
              <DockDots />
              <DockName>Layers</DockName>
              <DockDots />
              <DockButtons>
                <DockButton aria-label="Float">
                  <svg width="10" height="10" fill="none" stroke="#000"><path d="M3.500 3V1.500h5v4H7M1.500 4.500h5v4h-5zM3 2h6M1 5h6" /></svg>
                </DockButton>
                <DockButton aria-label="Close">
                  <svg width="10" height="10" stroke="#000" strokeWidth="1.500"><path d="M1.500 1.500l7 7M8.500 1.500l-7 7" /></svg>
                </DockButton>
              </DockButtons>
            </DockTitle>
            <Tree>
              {layers.map(layer => <Layer key={layer.name} layer={layer} />)}
            </Tree>
            <Tabs>
              <Tab $active>Layers</Tab>
              <Tab>Browser</Tab>
            </Tabs>
          </Dock>

          <Splitter />
          <MapPanel><CountyMap /></MapPanel>
        </Body>

        <StatusBar>
          <Spacer />
          <StatusButton aria-label="Toggle extents">
            <svg width="18" height="18" fill="none" stroke="#111" strokeWidth="1.500">
              <ellipse cx="6" cy="6" rx="2.500" ry="4" transform="rotate(-30 6 6)" fill="#777" />
              <ellipse cx="10" cy="5.500" rx="2" ry="4" transform="rotate(-30 10 5.500)" />
              <circle cx="11" cy="12" r="4" /><circle cx="10.500" cy="12" r="1" />
              <path d="M2 10l5 3M15 2l-2 3" />
            </svg>
          </StatusButton>
          <StatusLabel htmlFor="coordinate" $width={67}>Coordinate:</StatusLabel>
          <Coordinate id="coordinate" defaultValue="-130.9,70.9" />
          <StatusLabel htmlFor="scale" $width={38}>Scale</StatusLabel>
          <ScaleWrap>
            <ScaleSelect id="scale"><option>1:30,090,029</option></ScaleSelect>
            <Arrow width="8" height="5"><path d="M0 0h8L4 5z" /></Arrow>
          </ScaleWrap>
          <StatusButton aria-label="Stop rendering">
            <svg width="18" height="18" fill="none">
              <path d="M16 2L9 11l-4 5c4 0 6-1 7-4l5-8z" fill="#888" stroke="#555" />
              <circle cx="6" cy="6" r="4" stroke="#d94a4a" strokeWidth="1.500" /><path d="M3 3l6 6" stroke="#d94a4a" strokeWidth="1.500" />
            </svg>
          </StatusButton>
          <RenderLabel><Tick type="checkbox" defaultChecked />Render</RenderLabel>
          <StatusText>EPSG:4326</StatusText>
          <StatusButton aria-label="CRS status">
            <svg width="18" height="18" fill="none" stroke="#222">
              <circle cx="9" cy="9" r="6.500" strokeWidth="2.500" /><ellipse cx="9" cy="9" rx="3" ry="6" /><path d="M3 7h12M3 11h12M9 1v2M9 15v2M1 9h2M15 9h2" strokeWidth="1.200" />
            </svg>
          </StatusButton>
          <StatusButton aria-label="Messages">
            <svg width="16" height="16"><path d="M8 2l6.500 12h-13z" fill="#fbf6b5" stroke="#96935f" strokeLinejoin="round" /><path d="M8 6v4M8 11.500v1.500" stroke="#333" strokeWidth="1.500" /></svg>
          </StatusButton>
          <Grip width="16" height="14" stroke="#a6a6a6"><path d="M4 14L16 2M8 14l8-8M12 14l4-4" /></Grip>
        </StatusBar>
      </Client>
    </Window>
  </>
);

export default App;
